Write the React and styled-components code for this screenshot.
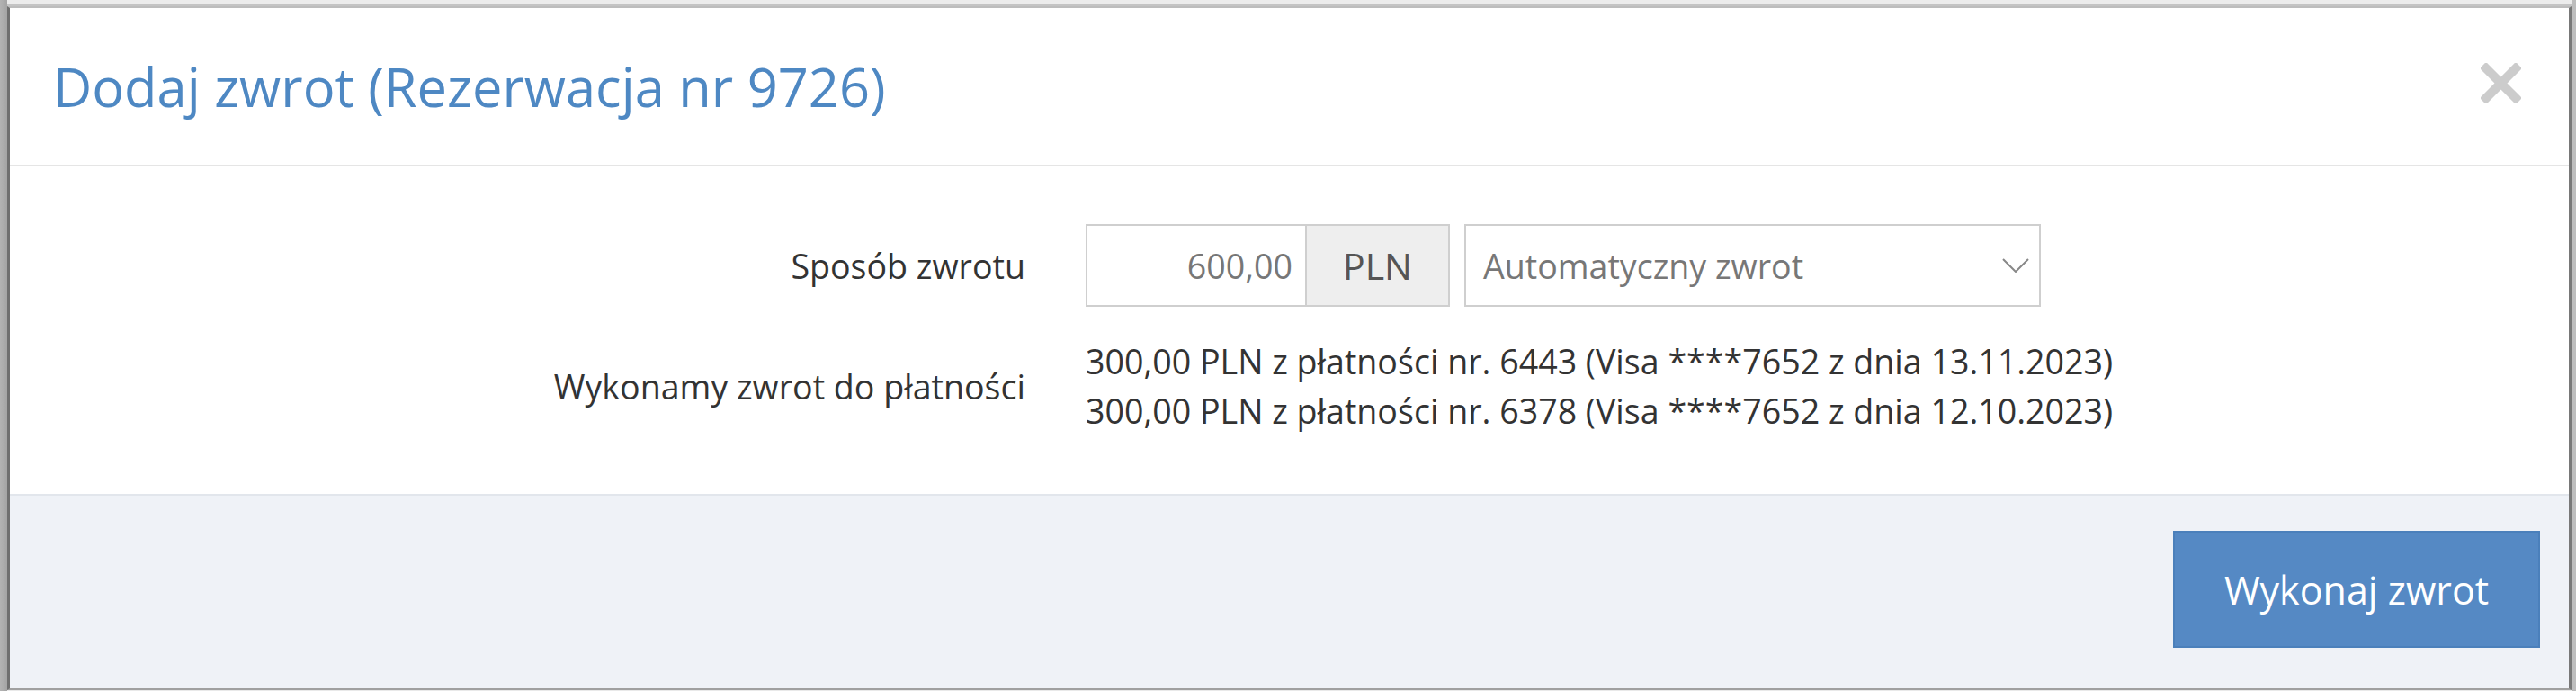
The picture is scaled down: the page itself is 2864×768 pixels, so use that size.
import React from "react";
import styled, { createGlobalStyle } from "styled-components";

const Global = createGlobalStyle`
  html, body { margin: 0; padding: 0; }
  body {
    font-family: "Open Sans", "Liberation Sans", sans-serif;
    background: #e9e9e9;
  }
  * { box-sizing: border-box; }
`;

const Backdrop = styled.div`
  width: 2864px;
  height: 768px;
  padding: 7px 5px 1px 8px;
  background:
    linear-gradient(to right, #b3b3b3 0, #a4a4a4 8px, transparent 8px),
    linear-gradient(to left, #bdbdbd 0, #bdbdbd 5px, transparent 5px),
    linear-gradient(to bottom, #ececec 0, #ececec 5px, #c4c4c4 5px, #c4c4c4 7px, #e9e9e9 7px);
`;

const Modal = styled.div`
  height: 100%;
  display: flex;
  flex-direction: column;
  background: #ffffff;
  border-top: 2px solid #bdbdbd;
  border-left: 3px solid #6f6f6f;
  border-right: 3px solid #787878;
  border-bottom: 2px solid #a0a0a0;
`;

const Header = styled.div`
  height: 176px;
  flex: none;
  display: flex;
  align-items: center;
  justify-content: space-between;
  padding: 0 53px 0 48px;
  border-bottom: 2px solid #e5e5e5;
`;

const Title = styled.h4`
  margin: 0;
  font-size: 59.6px;
  font-weight: 400;
  line-height: 1.2;
  color: #4e88c3;
`;

const CloseButton = styled.button`
  width: 45px;
  height: 45px;
  padding: 0;
  margin-top: -8px;
  border: 0;
  background: transparent;
  display: flex;
  align-items: center;
  justify-content: center;
  cursor: pointer;
`;

const Body = styled.div`
  flex: 1;
  padding-top: 64px;
  display: grid;
  grid-template-columns: 1129px auto;
  column-gap: 67px;
  row-gap: 33px;
  align-content: start;
`;

const Label = styled.div`
  align-self: center;
  text-align: right;
  font-size: 37.6px;
  line-height: 55px;
  color: #333333;
`;

const Controls = styled.div`
  display: flex;
  gap: 16px;
`;

const InputGroup = styled.div`
  display: flex;
  height: 92px;
`;

const AmountInput = styled.input`
  width: 244px;
  height: 100%;
  border: 2px solid #cfcfcf;
  border-right: 0;
  padding: 0 14px;
  text-align: right;
  font-family: inherit;
  font-size: 37.6px;
  color: #777777;
  background: #fff;
  outline: none;
`;

const Addon = styled.span`
  width: 161px;
  height: 100%;
  display: flex;
  align-items: center;
  justify-content: center;
  border: 2px solid #cfcfcf;
  background: #eeeeee;
  font-size: 41px;
  color: #555555;
`;

const Select = styled.div`
  width: 641px;
  height: 92px;
  display: flex;
  align-items: center;
  justify-content: space-between;
  padding: 0 11px 0 19px;
  border: 2px solid #cfcfcf;
  background: #fff;
  font-size: 37.6px;
  color: #777777;
`;

const Payments = styled.div`
  display: flex;
  flex-direction: column;
`;

const PaymentLine = styled.div`
  font-size: 37.6px;
  line-height: 55px;
  color: #333333;
  white-space: nowrap;
`;

const Footer = styled.div`
  height: 216px;
  flex: none;
  display: flex;
  justify-content: flex-end;
  align-items: flex-start;
  padding: 39px 32px 0 0;
  border-top: 2px solid #e2e6ec;
  background: #eff2f7;
`;

const PrimaryButton = styled.button`
  width: 408px;
  height: 130px;
  border: 2px solid #4b80bb;
  background: #5589c4;
  color: #ffffff;
  font-family: inherit;
  font-size: 43px;
  cursor: pointer;
`;

const payments = [
  "300,00 PLN z płatności nr. 6443 (Visa ****7652 z dnia 13.11.2023)",
  "300,00 PLN z płatności nr. 6378 (Visa ****7652 z dnia 12.10.2023)",
];

export default function App() {
  return (
    <>
      <Global />
      <Backdrop>
        <Modal>
          <Header>
            <Title>Dodaj zwrot (Rezerwacja nr 9726)</Title>
            <CloseButton aria-label="Zamknij">
              <svg width="45" height="45" viewBox="0 0 45 45">
                <path
                  d="M6 6 L39 39 M39 6 L6 39"
                  stroke="#cccccc"
                  strokeWidth="10"
                  strokeLinecap="square"
                />
              </svg>
            </CloseButton>
          </Header>
          <Body>
            <Label>Sposób zwrotu</Label>
            <Controls>
              <InputGroup>
                <AmountInput defaultValue="600,00" />
                <Addon>PLN</Addon>
              </InputGroup>
              <Select>
                <span>Automatyczny zwrot</span>
                <svg width="30" height="16" viewBox="0 0 30 16">
                  <path d="M1 1 L15 15 L29 1" fill="none" stroke="#888" strokeWidth="2" />
                </svg>
              </Select>
            </Controls>
            <Label>Wykonamy zwrot do płatności</Label>
            <Payments>
              {payments.map((p) => (
                <PaymentLine key={p}>{p}</PaymentLine>
              ))}
            </Payments>
          </Body>
          <Footer>
            <PrimaryButton>Wykonaj zwrot</PrimaryButton>
          </Footer>
        </Modal>
      </Backdrop>
    </>
  );
}
